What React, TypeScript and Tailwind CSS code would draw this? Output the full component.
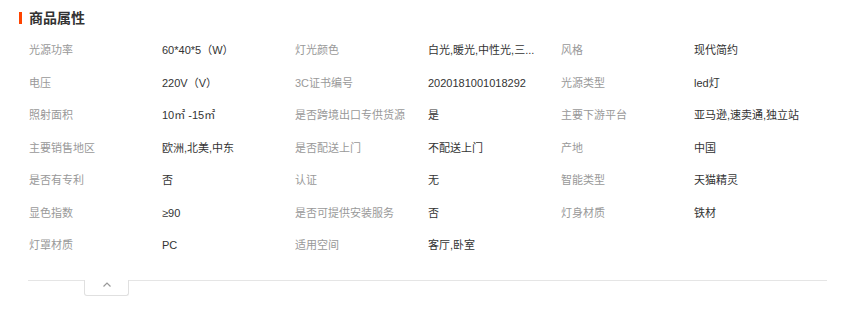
const ROWS: [string, string][][] = [
  [['光源功率', '60*40*5（W）'], ['灯光颜色', '白光,暖光,中性光,三...'], ['风格', '现代简约']],
  [['电压', '220V（V）'], ['3C证书编号', '2020181001018292'], ['光源类型', 'led灯']],
  [['照射面积', '10㎡ -15㎡'], ['是否跨境出口专供货源', '是'], ['主要下游平台', '亚马逊,速卖通,独立站']],
  [['主要销售地区', '欧洲,北美,中东'], ['是否配送上门', '不配送上门'], ['产地', '中国']],
  [['是否有专利', '否'], ['认证', '无'], ['智能类型', '天猫精灵']],
  [['显色指数', '≥90'], ['是否可提供安装服务', '否'], ['灯身材质', '铁材']],
  [['灯罩材质', 'PC'], ['适用空间', '客厅,卧室']],
];

export default function App() {
  return (
    <div className="w-[847px] h-[315px] bg-white pl-[19px] pr-[20px] font-['Liberation_Sans','Noto_Sans_CJK_SC',sans-serif]">
      {/* Title */}
      <div className="flex items-center h-[34px] pt-[2px]">
        <span className="w-[3px] h-[12px] bg-[#ff4400] mr-[7px]" />
        <h3 className="text-[14px] font-bold text-[#333] leading-none">商品属性</h3>
      </div>

      {/* Attributes */}
      <div className="pl-[10px]">
        {ROWS.map((row, i) => (
          <div key={i} className="grid grid-cols-6 h-[32.5px] items-center text-[11px]">
            {row.map(([label, value]) => (
              <div key={label} className="contents">
                <div className="text-[#999] whitespace-nowrap">{label}</div>
                <div className="text-[#333] whitespace-nowrap">{value}</div>
              </div>
            ))}
          </div>
        ))}
      </div>

      {/* Collapse tab */}
      <div className="mt-[18px] ml-[9px] border-t border-[#e5e5e5]">
        <button className="ml-[56px] -mt-px w-[45px] h-[16px] bg-white border border-t-0 border-[#e0e0e0] rounded-b-[3px] flex items-start justify-center pt-[2px]">
          <svg width="8" height="5" viewBox="0 0 8 5" fill="none">
            <polyline points="0.5,4.5 4,1 7.5,4.5" stroke="#999" strokeWidth="1.2" />
          </svg>
        </button>
      </div>
    </div>
  );
}
